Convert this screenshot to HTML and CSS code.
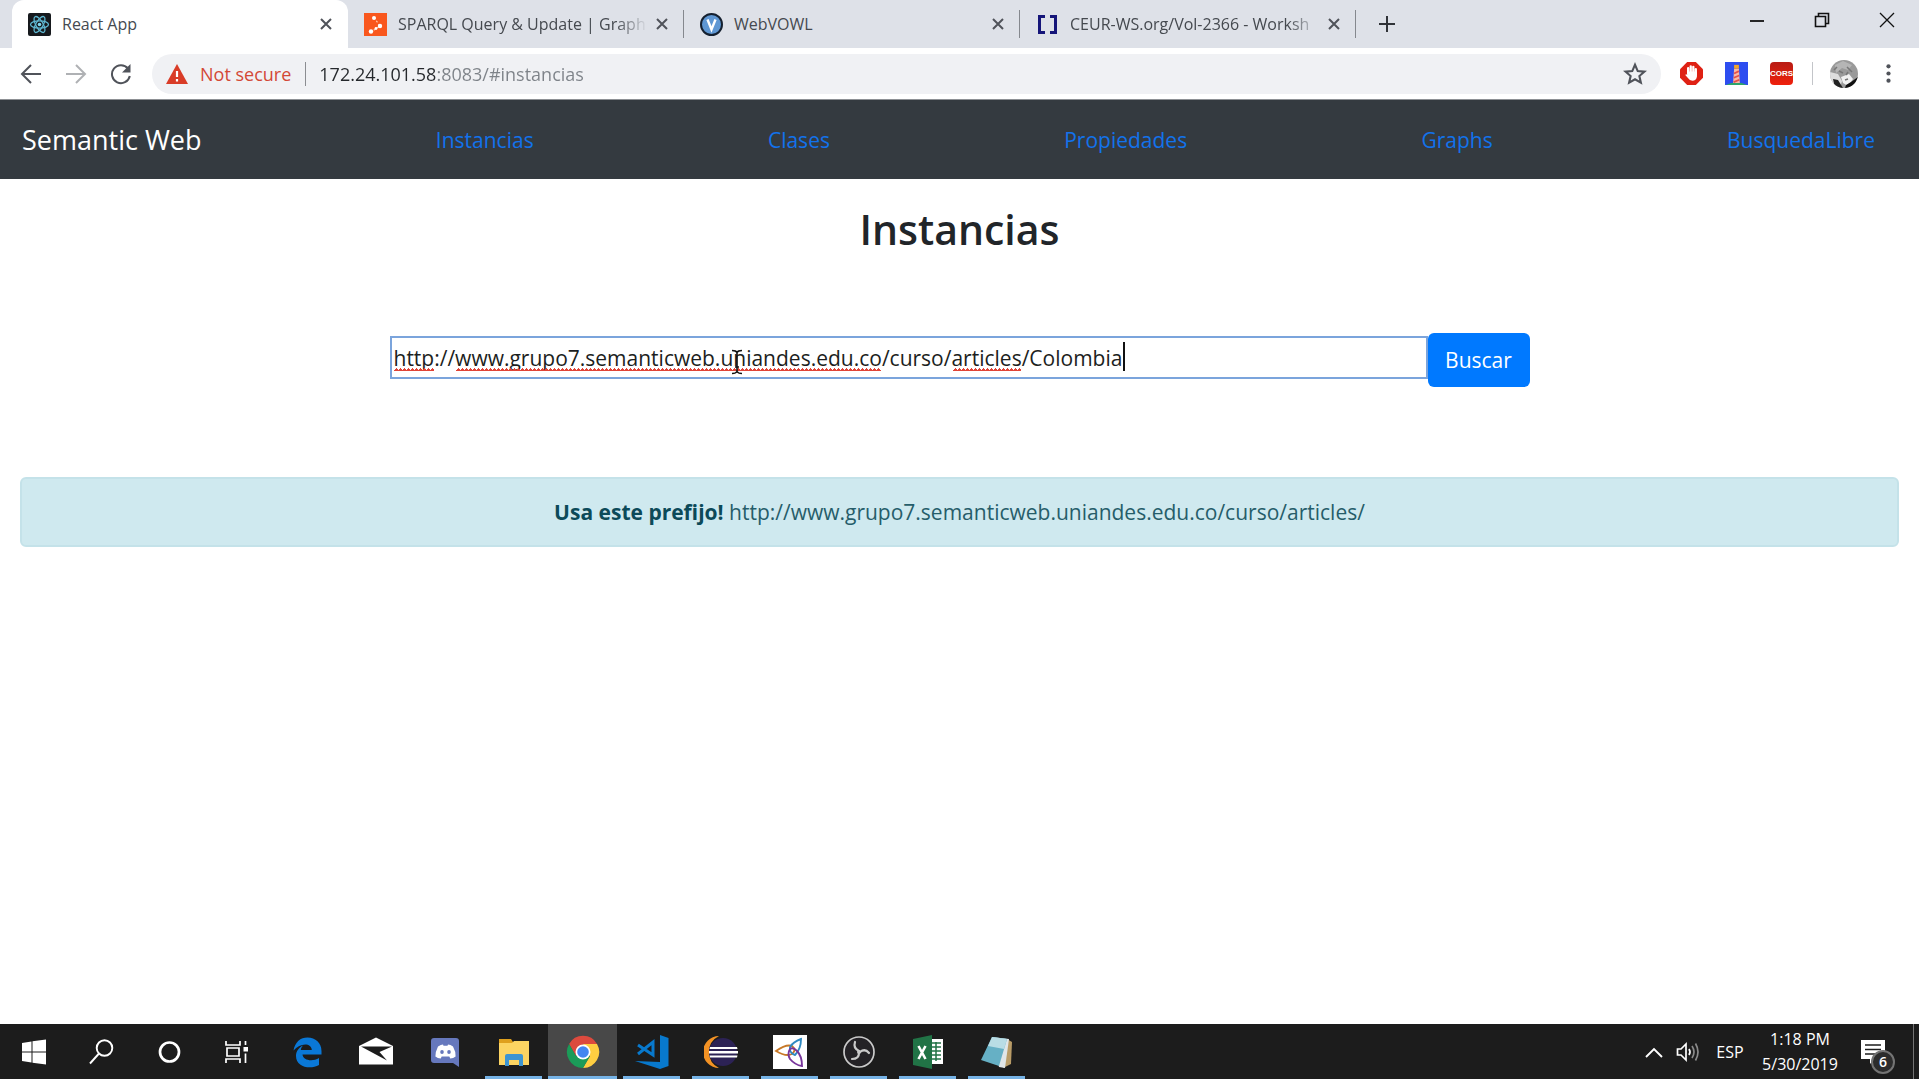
FILE: index.html
```html
<!DOCTYPE html>
<html lang="es">
<head>
<meta charset="utf-8">
<title>React App</title>
<link rel="stylesheet" href="styles.css">
</head>
<body>
<header class="browser">
  <div class="tabstrip">
    <div class="tab tab-active">
      <svg class="favicon" viewBox="0 0 23 23"><rect width="23" height="23" rx="2" fill="#16191d"/><g fill="none" stroke="#5fb8d2" stroke-width="1.3"><ellipse cx="11.500" cy="11.500" rx="9" ry="3.600"/><ellipse cx="11.500" cy="11.500" rx="9" ry="3.600" transform="rotate(60 11.500 11.500)"/><ellipse cx="11.500" cy="11.500" rx="9" ry="3.600" transform="rotate(120 11.500 11.500)"/></g><circle cx="11.500" cy="11.500" r="1.800" fill="#7fd6ee"/></svg>
      <span class="tab-title">React App</span>
      <button class="tab-close" aria-label="Close tab"><svg viewBox="0 0 12 12"><path d="M1 1l10 10M11 1L1 11"/></svg></button>
    </div>
    <div class="tab">
      <svg class="favicon" viewBox="0 0 23 23"><rect width="23" height="23" fill="#f9571d"/><path d="M10 4.500L16 13L7 19" fill="none" stroke="#ffc9ae" stroke-width="1.200" stroke-dasharray="2 2"/><g fill="#fff"><circle cx="10" cy="5" r="2"/><circle cx="16" cy="13" r="2.200"/><circle cx="7" cy="18.500" r="2.200"/><circle cx="12" cy="15.500" r="1.400"/></g></svg>
      <span class="tab-title tab-title-long">SPARQL Query &amp; Update | Graph</span>
      <button class="tab-close" aria-label="Close tab"><svg viewBox="0 0 12 12"><path d="M1 1l10 10M11 1L1 11"/></svg></button>
    </div>
    <div class="tab">
      <svg class="favicon" viewBox="0 0 23 23"><circle cx="11.500" cy="11.500" r="10.500" fill="#5f97d3" stroke="#15202f" stroke-width="2"/><path d="M7.500 6.500l4 10 4-10" fill="none" stroke="#fff" stroke-width="2.400"/></svg>
      <span class="tab-title">WebVOWL</span>
      <button class="tab-close" aria-label="Close tab"><svg viewBox="0 0 12 12"><path d="M1 1l10 10M11 1L1 11"/></svg></button>
    </div>
    <div class="tab">
      <svg class="favicon" viewBox="0 0 23 23"><path d="M9 3.500H3.500v16H9M14 3.500h5.500v16H14" fill="none" stroke="#151579" stroke-width="3"/></svg>
      <span class="tab-title tab-title-long">CEUR-WS.org/Vol-2366 - Worksh</span>
      <button class="tab-close" aria-label="Close tab"><svg viewBox="0 0 12 12"><path d="M1 1l10 10M11 1L1 11"/></svg></button>
    </div>
    <button class="new-tab" aria-label="New tab"><svg viewBox="0 0 18 18"><path d="M9 1v16M1 9h16"/></svg></button>
    <div class="window-controls">
      <button aria-label="Minimize"><svg viewBox="0 0 16 16"><path d="M1 9h14" stroke-width="1.800"/></svg></button>
      <button aria-label="Restore"><svg viewBox="0 0 16 16"><path d="M1.500 4.500h10v10h-10zM4.500 4V1.500h10v10H12" stroke-width="1.600"/></svg></button>
      <button aria-label="Close"><svg viewBox="0 0 16 16"><path d="M1 1l14 14M15 1L1 15" stroke-width="1.300"/></svg></button>
    </div>
  </div>
  <div class="toolbar">
    <div class="nav-buttons">
      <button aria-label="Back"><svg viewBox="0 0 22 22"><path d="M21 11H3M11 2L2 11l9 9"/></svg></button>
      <button aria-label="Forward" class="disabled"><svg viewBox="0 0 22 22"><path d="M1 11h18M11 2l9 9-9 9"/></svg></button>
      <button aria-label="Reload"><svg viewBox="0 0 22 22"><path d="M18 5.500A9 9 0 1 0 19.800 13"/><path d="M20.500 1v8.500H12z" fill="#50535a" stroke="none"/></svg></button>
    </div>
    <div class="omnibox">
      <svg class="warning" viewBox="0 0 22 20"><path d="M11 0l11 20H0z" fill="#d93c27"/><path d="M11 7v6M11 15v2.400" stroke="#fff" stroke-width="2.200"/></svg>
      <span class="not-secure">Not secure</span>
      <input class="address" aria-label="Address" value="172.24.101.58:8083/#instancias" spellcheck="false">
      <button class="star" aria-label="Bookmark"><svg viewBox="0 0 22 22"><path d="M11 2.500l2.500 5.800 6.200.5-4.700 4.100 1.400 6.100L11 15.800 5.600 19l1.400-6.100-4.700-4.100 6.200-.5z" fill="none" stroke="#50535a" stroke-width="1.900"/></svg></button>
    </div>
    <div class="extensions">
      <button aria-label="Ad blocker"><svg viewBox="0 0 24 24"><path d="M7.500 0h9L24 7.500v9L16.500 24h-9L0 16.500v-9z" fill="#df2114"/><path d="M8.500 12V6.500M11.200 11V4.500M13.900 11V5M16.500 13V7.500" stroke="#fff" stroke-width="2.400" stroke-linecap="round"/><path d="M7.500 10h10.200v5q-.8 4.500-4.800 4.500-3 0-4.400-2.500L5.500 13.500q1-1.500 2 0z" fill="#fff"/></svg></button>
      <button aria-label="Lighthouse"><svg viewBox="0 0 24 24"><path fill="#2d4df0" d="M0 0h24v24H0z"/><path d="M1 24q11-5 22 0z" fill="#2da56b"/><path d="M9.500 7h5l1 15h-7z" fill="#f7b8a4"/><path d="M9.500 3h5v4h-5z" fill="#f2a52b"/><path d="M9.500 12l5-2.500M9.200 16.500l5.600-2.500M9 21l6-2.500" stroke="#e6504a" stroke-width="1.800"/></svg></button>
      <button aria-label="CORS" class="cors">CORS</button>
      <span class="toolbar-divider"></span>
      <button aria-label="Profile"><svg class="avatar" viewBox="0 0 28 28"><defs><clipPath id="round"><circle cx="14" cy="14" r="14"/></clipPath></defs><g clip-path="url(#round)"><path fill="#9a9a9a" d="M0 0h28v28H0z"/><path d="M0 12l8 2 4 7-2 7H0z" fill="#dedede"/><path d="M3 19l5 1 5 8H5z" fill="#222"/><path d="M11 17l8-3 4 5-5 7-5-3z" fill="#f1f1f1"/><path d="M21 22l7-5v11H15l1-3z" fill="#111"/><path d="M5 5l8-4 9 4-4 5-6-2-6 5z" fill="#b5b5b5"/><path d="M9 11l4 2M17 7l5 5M18 12l-2 3M4 10l3-3M15 20l3-1" stroke="#777" stroke-width="1.500"/></g></svg></button>
      <button aria-label="Menu"><svg viewBox="0 0 24 24" fill="#50535a"><circle cx="12" cy="4.500" r="2.200"/><circle cx="12" cy="12" r="2.200"/><circle cx="12" cy="19.500" r="2.200"/></svg></button>
    </div>
  </div>
</header>

<nav class="navbar">
  <a class="brand" href="#">Semantic Web</a>
  <a href="#instancias">Instancias</a>
  <a href="#clases">Clases</a>
  <a href="#propiedades">Propiedades</a>
  <a href="#graphs">Graphs</a>
  <a href="#busqueda">BusquedaLibre</a>
</nav>

<main class="content">
  <h1>Instancias</h1>
  <form class="search" onsubmit="return false">
    <div class="field">
      <input aria-label="Instancia" value="http://www.grupo7.semanticweb.uniandes.edu.co/curso/articles/Colombia" spellcheck="false">
      <span class="squiggle squiggle-scheme"></span>
      <span class="squiggle squiggle-host"></span>
      <span class="squiggle squiggle-path"></span>
      <span class="caret"></span>
      <svg class="pointer" viewBox="0 0 12 26"><path d="M1 1.500q4 0 5 2 1-2 5-2M1 24.500q4 0 5-2 1 2 5 2M6 3v20M4 18h4" fill="none" stroke="#111" stroke-width="1.600"/></svg>
    </div>
    <button class="submit">Buscar</button>
  </form>
  <p class="alert"><strong>Usa este prefijo!</strong> http://www.grupo7.semanticweb.uniandes.edu.co/curso/articles/</p>
</main>

<footer class="taskbar">
  <div class="pinned">
    <button aria-label="Start"><svg viewBox="0 0 34 34"><path fill="#fff" d="M5 8l9.500-1.500v10H5zM15.500 6.300L29 4.500v12H15.500zM5 17.500h9.500v10L5 26zM15.500 17.500H29v12l-13.500-1.800z"/></svg></button>
    <button aria-label="Search"><svg viewBox="0 0 34 34"><g fill="none" stroke="#fff" stroke-width="1.900"><circle cx="19.500" cy="13" r="7.800"/><path d="M14 18.500L5 28.500"/></g></svg></button>
    <button aria-label="Cortana"><svg viewBox="0 0 34 34"><circle cx="16.500" cy="17" r="9.500" fill="none" stroke="#fff" stroke-width="2.700"/></svg></button>
    <button aria-label="Task view"><svg viewBox="0 0 34 34"><g fill="none" stroke="#fff" stroke-width="1.700"><path d="M5 6v4h14V6M6 13h12v8H6zM5 28v-4h14v4M24.500 6v4M24.500 18.500V28"/></g><path fill="#fff" d="M22.500 12h4.500v4.500h-4.500z"/></svg></button>
  </div>
  <div class="apps">
    <button aria-label="Edge"><svg viewBox="0 0 34 34"><path fill="#0a78d7" d="M3.500 15.500C5 7 10.500 2.500 17.500 2.500c8 0 14 5.500 14 13.500v3.500H12.500c.5 6 10 7.500 16.500 3.500v7c-9 5-23 2-23-9 0-5 3-8.500 7-10.500-1.500 1.500-2 3-2.200 4.500h11C21.500 7.500 10 7.500 3.500 15.500z"/></svg></button>
    <button aria-label="Mail"><svg viewBox="0 0 34 34"><path fill="#fff" d="M0 11L17 2.500 34 11v18.500H0z"/><path fill="#1c1c1c" d="M2 11.500h31L20.500 17l7.500 8.500z"/></svg></button>
    <button aria-label="Discord"><svg viewBox="0 0 34 34"><path fill="#6678bd" d="M6 3h22q3 0 3 3v26l-6-4H6q-3 0-3-3V6q0-3 3-3z"/><path fill="#fff" d="M10 11.500q3-2 5-2l.5 1.200h4l.5-1.200q2.500 0 5 2 2.800 5 2.600 10-2.300 2-5.300 2l-1-2h-7.600l-1 2q-3 0-5.300-2 0-5 2.600-10z"/><g fill="#6678bd"><ellipse cx="14" cy="17" rx="1.800" ry="2"/><ellipse cx="21" cy="17" rx="1.800" ry="2"/></g></svg></button>
    <button aria-label="File Explorer" class="running"><svg viewBox="0 0 34 34"><path fill="#dfa01d" d="M2 4h12l2 3v4H2z"/><path fill="#fcd462" d="M2 8h13l2-2h15v24H2z"/><path fill="#3d94d1" d="M8 31V21q0-2 2-2h14q2 0 2 2v10h-4v-6H12v6z"/></svg></button>
    <button aria-label="Chrome" class="running current"><svg viewBox="0 0 34 34"><path fill="#dc4a3e" d="M3.100 9A16 16 0 0 1 31 9H17l-7 12z"/><path fill="#ffce41" d="M31 9A16 16 0 0 1 17 33l7-12-7-12z"/><path fill="#1b9b58" d="M3.100 9A16 16 0 0 0 17 33l7-12H10z"/><circle cx="17" cy="17" r="7.500" fill="#fff"/><circle cx="17" cy="17" r="5.800" fill="#4486f1"/></svg></button>
    <button aria-label="Visual Studio Code" class="running"><svg viewBox="0 0 34 34"><path fill="#0879cd" d="M25 0l8.500 3v28L25 34 0 26l25 1z"/><path fill="none" stroke="#0879cd" stroke-width="3" d="M3 10l15 10V7L3 19"/></svg></button>
    <button aria-label="Eclipse" class="running"><svg viewBox="0 0 34 34"><path fill="#f39224" d="M15 1A16 16 0 0 0 15 33Q5 28 5 17T15 1z"/><circle cx="19" cy="17" r="14" fill="#2c2255"/><path fill="#fff" d="M6 12h27l.5 2H5.500zM5 16h29v2.500H5zM5.500 20.500h28L33 22.500H6z"/></svg></button>
    <button aria-label="Ontology tool" class="running"><svg viewBox="0 0 34 34"><path fill="#fff" d="M0 0h34v34H0z"/><g fill="none" stroke-width="1.900"><path d="M3 16q10-7 16-5 5 4 0 8-6 3-16-3z" stroke="#c77827"/><path d="M28 4q-8 3-11 8-1 6 5 8Q28 14 28 4z" stroke="#2f8ac2"/><path d="M17 14q-3 5 0 10 5 6 12 7 0-10-5-15-4-4-7-2z" stroke="#78359b"/></g></svg></button>
    <button aria-label="OBS" class="running"><svg viewBox="0 0 34 34"><circle cx="17" cy="17" r="15" fill="#242226" stroke="#cacaca" stroke-width="1.700"/><g fill="none" stroke="#cacaca" stroke-width="2.200" stroke-linecap="round"><path d="M17 16Q11 13 13 7M18 17q5-4 9 1M17 18q0 6-7 6"/></g><circle cx="17" cy="17" r="2" fill="#cacaca"/></svg></button>
    <button aria-label="Excel" class="running"><svg viewBox="0 0 34 34"><path fill="#fff" d="M17 4h15v25H17z"/><path d="M20 8h10M20 12h10M20 16h10M20 20h10M20 24h10M25 7v19" stroke="#217346" stroke-width="1.500"/><path fill="#217346" d="M2 4l19-4v34L2 30z"/><path d="M7.500 11l7 13M14.500 11l-7 13" stroke="#fff" stroke-width="2.600"/></svg></button>
    <button aria-label="Notepad" class="running"><svg viewBox="0 0 34 34"><path fill="#b99c67" d="M27 4l5 3-1 22-8 4z"/><path fill="#e0e6e8" d="M12 2l17 2-4 29-6-1z"/><path fill="#66b0c5" d="M12 2l15 2-8 27-18-6z"/><path fill="#b9dde5" d="M12 2l15 2-3 10-16-3z"/></svg></button>
  </div>
  <div class="tray">
    <button aria-label="Hidden icons"><svg viewBox="0 0 24 24"><path d="M4 17l8-8 8 8" fill="none" stroke="#fff" stroke-width="1.900"/></svg></button>
    <button aria-label="Volume"><svg viewBox="0 0 24 24"><g fill="none" stroke="#fff" stroke-width="1.700"><path d="M1.500 9H5l5-5v16l-5-5H1.500zM13 9q2 3 0 6"/><path d="M16 6q4 6 0 12M19.500 3.500q5 8.500 0 17" stroke="#8a8a8a"/></g></svg></button>
    <button class="language">ESP</button>
    <button class="clock"><span>1:18 PM</span><span>5/30/2019</span></button>
    <button class="notices" aria-label="Notifications"><svg viewBox="0 0 26 26"><path fill="#fff" d="M1 1h24v19H14l-4 5v-5H1z"/><path d="M5 6h16M5 10.500h16M5 15h10" stroke="#1c1c1c" stroke-width="1.600"/></svg><span class="badge">6</span></button>
    <span class="show-desktop"></span>
  </div>
</footer>
</body>
</html>
```

FILE: styles.css
```css
* { box-sizing: border-box; }
body {
  margin: 0;
  min-height: 100vh;
  display: flex;
  flex-direction: column;
  background: #fff;
  color: #212529;
  font-family: "Open Sans", "Noto Sans", sans-serif;
  font-size: 21px;
  line-height: 32px;
}
button {
  display: flex;
  align-items: center;
  justify-content: center;
  padding: 0;
  border: 0;
  background: none;
  color: inherit;
  font: inherit;
}
input { font: inherit; }
svg { display: block; flex: none; }
a { text-decoration: none; }

/* Browser tabs */
.tabstrip {
  display: flex;
  height: 48px;
  padding-left: 12px;
  background: #dee1e8;
}
.tab {
  position: relative;
  display: flex;
  align-items: center;
  width: 336px;
  padding: 0 13px 0 16px;
  color: #45494f;
  font-size: 16px;
}
.tab + .tab::after {
  content: "";
  position: absolute;
  right: 0;
  top: 10px;
  height: 28px;
  border-right: 1px solid #85888e;
}
.tab-active {
  border-radius: 12px 12px 0 0;
  background: #fff;
}
.favicon { width: 23px; height: 23px; }
.tab-title {
  flex: 1;
  padding-left: 11px;
  white-space: nowrap;
}
.tab-title-long { mask-image: linear-gradient(to right, #000 86%, transparent 98%); }
.tab-close { width: 18px; height: 24px; }
.tab-close svg { width: 12px; height: 12px; stroke: #50535a; stroke-width: 2; }
.new-tab { width: 62px; }
.new-tab svg { width: 18px; height: 18px; stroke: #303338; stroke-width: 2; }
.window-controls { display: flex; height: 40px; margin-left: auto; }
.window-controls button { width: 65px; }
.window-controls svg { width: 16px; height: 16px; fill: none; stroke: #111; }

/* Browser toolbar */
.toolbar {
  display: flex;
  align-items: center;
  height: 52px;
  padding: 0 8px;
  border-bottom: 1px solid #8d9094;
}
.nav-buttons { display: flex; width: 144px; }
.nav-buttons button { width: 45px; height: 40px; }
.nav-buttons svg { width: 22px; height: 22px; fill: none; stroke: #50535a; stroke-width: 2; }
.nav-buttons .disabled { opacity: .45; }
.omnibox {
  flex: 1;
  display: flex;
  align-items: center;
  height: 40px;
  padding: 0 14px;
  border-radius: 20px;
  background: #f0f1f4;
  font-size: 18px;
  line-height: 30px;
}
.warning { width: 22px; height: 20px; }
.not-secure {
  margin: 0 14px 0 12px;
  color: #d34836;
}
.address {
  flex: 1;
  height: 24px;
  padding: 0 0 0 13px;
  border: 0;
  border-left: 1px solid #8b8d91;
  outline: 0;
  color: transparent;
  background: linear-gradient(to right, #25282c 131px, #7d8288 131px) text;
}
.star svg { width: 24px; height: 24px; }
.extensions { display: flex; align-items: center; padding-left: 8px; }
.extensions button { width: 45px; height: 40px; }
.extensions svg { width: 23px; height: 23px; }
.extensions .avatar { width: 28px; height: 28px; }
.extensions .cors {
  width: 23px;
  height: 23px;
  margin: 0 11px;
  border-radius: 4px;
  background: linear-gradient(#b71c14, #f0200c);
  color: #fff;
  font-family: "Liberation Sans", sans-serif;
  font-size: 8px;
  font-weight: 700;
}
.toolbar-divider { width: 1px; height: 23px; margin: 0 8px; background: #c3c5c9; }

/* Site navigation */
.navbar {
  display: flex;
  align-items: center;
  justify-content: space-between;
  min-height: 79px;
  padding: 0 44px 0 22px;
  background: #343a40;
}
.navbar a { color: #1272ec; }
.navbar .brand { color: #fff; font-size: 27px; }

/* Page content */
.content { flex: 1; padding: 20px; }
h1 {
  margin: 0;
  text-align: center;
  font-size: 41px;
  font-weight: 600;
  line-height: 60px;
}
.search {
  display: flex;
  align-items: flex-start;
  justify-content: center;
  margin: 74px 0 90px;
}
.field {
  position: relative;
  width: 1038px;
  margin-top: 3px;
}
.field input {
  display: block;
  width: 100%;
  height: 43px;
  padding: 0 2px;
  border: 2px solid #7ba4dc;
  outline: 0;
  color: #1c1e21;
}
.squiggle {
  position: absolute;
  top: 32px;
  height: 4px;
  background: conic-gradient(from 135deg at top, #e04438 90deg, transparent 0) 0 0 / 4px 3px repeat-x;
}
.squiggle-scheme { left: 4px; width: 40px; }
.squiggle-host { left: 66px; width: 425px; }
.squiggle-path { left: 563px; width: 68px; }
.caret { position: absolute; left: 733px; top: 6px; width: 2px; height: 29px; background: #111; }
.pointer { position: absolute; left: 341px; top: 13px; width: 12px; height: 26px; }
.submit {
  width: 102px;
  height: 54px;
  border-radius: 6px;
  background: #0079ff;
  color: #fff;
}
.alert {
  margin: 0;
  padding: 17px;
  border: 2px solid #c4e2e9;
  border-radius: 6px;
  background: #cfe9ef;
  color: #265d6a;
  text-align: center;
}
.alert strong { color: #0c4a59; }

/* Desktop taskbar */
.taskbar {
  display: flex;
  height: 55px;
  background: #1c1c1c;
  color: #fff;
}
.pinned, .apps, .tray { display: flex; }
.pinned button { width: 68px; }
.pinned svg, .apps svg { width: 34px; height: 34px; }
.apps button { position: relative; width: 69px; }
.running::after {
  content: "";
  position: absolute;
  left: 6px;
  right: 6px;
  bottom: 0;
  height: 3px;
  background: #76b3e6;
}
.current { background: #484848; }
.current::after { left: 0; right: 0; }
.tray { margin-left: auto; font-size: 16px; }
.tray button { width: 34px; }
.tray svg { width: 24px; height: 24px; }
.tray .language { width: 50px; }
.tray .clock { width: 90px; flex-direction: column; line-height: 25px; }
.tray .notices { position: relative; width: 56px; }
.tray .notices svg { width: 26px; height: 26px; }
.badge {
  position: absolute;
  left: 26px;
  top: 26px;
  width: 24px;
  height: 24px;
  border: 2px solid #747474;
  border-radius: 50%;
  background: #2c2c2c;
  font-size: 14px;
  font-weight: 600;
  line-height: 20px;
}
.show-desktop { width: 6px; margin-left: 12px; border-left: 1px solid #747474; }
```
